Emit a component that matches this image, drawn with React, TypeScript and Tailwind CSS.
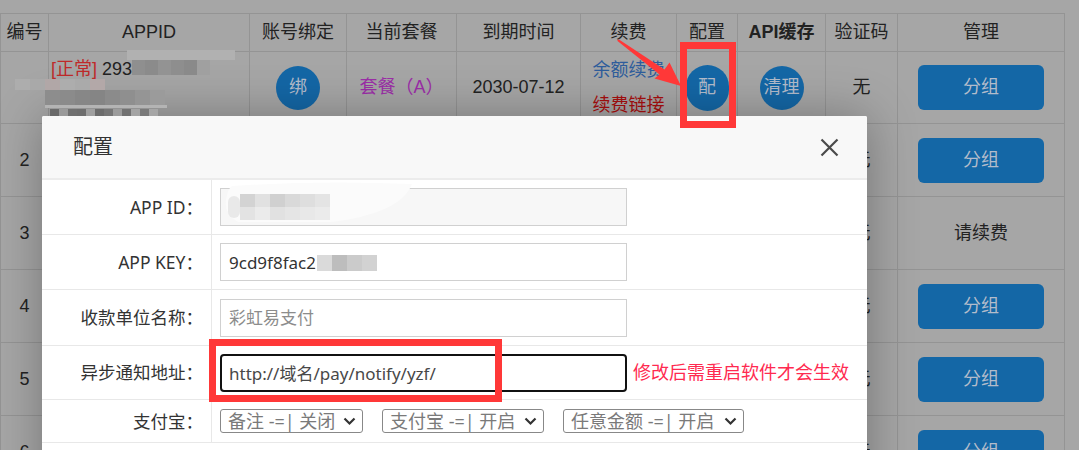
import React from "react";

const HEAD = ["编号", "APPID", "账号绑定", "当前套餐", "到期时间", "续费", "配置", "API缓存", "验证码", "管理"];

const Circle = ({ t }: { t: string }) => (
  <div className="w-[44px] h-[44px] rounded-full bg-[#1467a6] text-[#b3bccb] flex items-center justify-center text-[18px]">
    {t}
  </div>
);

const GroupBtn = () => (
  <div className="w-[126px] h-[45px] rounded-[6px] bg-[#1467a6] text-[#b3bccb] flex items-center justify-center text-[18px]">
    分组
  </div>
);

function Cell({ i, children, className = "" }: { i: number; children?: React.ReactNode; className?: string }) {
  const w = [
    "w-[48px]",
    "w-[201px]",
    "w-[97px]",
    "w-[110px]",
    "w-[124px]",
    "w-[96px]",
    "w-[61px]",
    "w-[88px]",
    "w-[72px]",
    "w-[167px]",
  ][i];
  return (
    <div className={`${w} shrink-0 h-full border-r border-[#949494] flex items-center justify-center ${className}`}>
      {children}
    </div>
  );
}

function Row({ h, children }: { h: string; children: React.ReactNode }) {
  return <div className={`flex ${h} border-b border-[#949494]`}>{children}</div>;
}

function Chevron() {
  return (
    <svg width="13" height="9" viewBox="0 0 13 9" className="shrink-0">
      <polyline points="1.5,1.5 6.5,6.5 11.5,1.5" fill="none" stroke="#333" strokeWidth="2.2" />
    </svg>
  );
}

function Sel({ w, text }: { w: string; text: string }) {
  return (
    <div
      className={`${w} h-[24px] border border-[#888] rounded-[3px] pl-[7px] pr-[6px] flex items-center justify-between text-[18px] leading-none text-[#7a7a7a] whitespace-nowrap`}
    >
      <span>{text}</span>
      <Chevron />
    </div>
  );
}

function FormRow({ h, label, children }: { h: string; label: string; children: React.ReactNode }) {
  return (
    <div className={`flex ${h} border-b border-[#e8e8e8]`}>
      <div className="w-[170px] shrink-0 border-r border-[#e8e8e8] flex items-center justify-end pr-[8px] text-[17.5px] text-[#333]">
        {label}
      </div>
      <div className="flex-1 flex items-center pl-[8px]">{children}</div>
    </div>
  );
}

export default function App() {
  const rows = [2, 3, 4, 5, 6];
  const mosaic = (x: number, y: number, w: number, h: number, colors: string[]) =>
    colors.map((c, k) => <rect key={`${x}-${y}-${k}`} x={x + k * w} y={y} width={w} height={h} fill={c} />);

  return (
    <div
      className="relative w-[1079px] h-[450px] overflow-hidden bg-[#a6a6a6]"
      style={{ fontFamily: '"Liberation Sans", "Noto Sans CJK SC", sans-serif' }}
    >
      {/* background table */}
      <div className="pt-[13px]">
        <div className="w-[1065px] border-l border-t border-[#949494] text-[18px] text-[#222]">
          <Row h="h-[38px]">
            {HEAD.map((t, i) => (
              <Cell key={t} i={i} className={i === 7 ? "font-bold" : ""}>
                {t}
              </Cell>
            ))}
          </Row>
          <Row h="h-[72px]">
            <Cell i={0} />
            <Cell i={1} className="!items-start !justify-start pl-[2px] pt-[5px]">
              <div className="leading-[25px]">
                <span className="text-[#bf2a2a]">[正常]</span> 293
              </div>
            </Cell>
            <Cell i={2}>
              <Circle t="绑" />
            </Cell>
            <Cell i={3}>
              <span className="text-[#9c2ea8]">套餐（A）</span>
            </Cell>
            <Cell i={4}>2030-07-12</Cell>
            <Cell i={5} className="flex-col gap-[11px]">
              <span className="text-[#2e5d9c] leading-[24px]">余额续费</span>
              <span className="text-[#a80e0e] leading-[24px]">续费链接</span>
            </Cell>
            <Cell i={6}>
              <div className="w-[43px] h-[46px] rounded-full bg-[#1467a6] text-[#b3bccb] flex items-center justify-center text-[18px]">
                配
              </div>
            </Cell>
            <Cell i={7}>
              <Circle t="清理" />
            </Cell>
            <Cell i={8}>无</Cell>
            <Cell i={9}>
              <GroupBtn />
            </Cell>
          </Row>
          {rows.map((n) => (
            <Row key={n} h="h-[73px]">
              <Cell i={0}>{n}</Cell>
              {[1, 2, 3, 4, 5, 6, 7].map((i) => (
                <Cell key={i} i={i} />
              ))}
              <Cell i={8}>无</Cell>
              <Cell i={9}>{n === 3 ? <span>请续费</span> : <GroupBtn />}</Cell>
            </Row>
          ))}
        </div>
      </div>

      {/* modal */}
      <div
        className="absolute left-[42px] top-[116px] w-[825px] h-[400px] bg-white rounded-t-[2px] shadow-[1px_1px_50px_rgba(0,0,0,0.3)] z-10"
        style={{ fontFamily: '"Noto Sans", "Noto Sans CJK SC", sans-serif' }}
      >
        <div className="h-[64px] bg-[#f8f8f8] border-b-2 border-[#ececec] flex items-center justify-between pl-[31px] pr-[28px] rounded-t-[2px]">
          <span className="text-[20px] text-[#333]">配置</span>
          <svg width="19" height="19" viewBox="0 0 19 19">
            <path d="M1.5 1.5 L17.5 17.5 M17.5 1.5 L1.5 17.5" stroke="#4a4a4a" strokeWidth="2.2" />
          </svg>
        </div>
        <FormRow h="h-[55px]" label="APP ID：">
          <div className="w-[407px] h-[38px] border border-[#d0d0d0] bg-[#f7f7f7]" />
        </FormRow>
        <FormRow h="h-[55px]" label="APP KEY：">
          <input
            readOnly
            defaultValue="9cd9f8fac2"
            className="w-[407px] h-[38px] border border-[#d0d0d0] bg-white pl-[8px] text-[17px] text-[#333] outline-none"
          />
        </FormRow>
        <FormRow h="h-[56px]" label="收款单位名称：">
          <input
            readOnly
            placeholder="彩虹易支付"
            className="w-[407px] h-[38px] border border-[#d0d0d0] bg-white pl-[8px] text-[17px] text-[#333] placeholder:text-[#8c8c8c] outline-none"
          />
        </FormRow>
        <FormRow h="h-[54px]" label="异步通知地址：">
          <input
            readOnly
            defaultValue="http://域名/pay/notify/yzf/"
            className="w-[407px] h-[38px] border-2 border-[#111] rounded-[4px] bg-white pl-[7px] text-[17px] text-[#484848] outline-none"
          />
          <span className="ml-[6px] text-[18px] text-[#ff2a50] whitespace-nowrap">修改后需重启软件才会生效</span>
        </FormRow>
        <FormRow h="h-[43px]" label="支付宝：">
          <div className="flex gap-[19px]">
            <Sel w="w-[143px]" text="备注 -=| 关闭" />
            <Sel w="w-[162px]" text="支付宝 -=| 开启" />
            <Sel w="w-[181px]" text="任意金额 -=| 开启" />
          </div>
        </FormRow>
        <div className="h-[60px]" />
      </div>

      {/* annotations & redactions */}
      <svg className="absolute left-0 top-0 z-20 pointer-events-none" width="1079" height="450" viewBox="0 0 1079 450">
        {/* table row 1 redactions */}
        <rect x="127" y="50" width="108" height="10" fill="#b1b1b1" />
        {mosaic(132, 60, 13, 15, ["#8f8f8f", "#8b8b8b", "#939393", "#8e8e8e", "#8a8a8a", "#a0a0a0"])}
        {mosaic(15, 79, 15, 11, ["#adadad", "#a9a9a9", "#b1a7a7", "#adadad", "#aaaaaa", "#b3a8a8"])}
        {mosaic(45, 90, 15, 15, ["#8d8d8d", "#8b8b8b", "#878787", "#858585", "#8b8b8b", "#8f8f8f", "#959595", "#9b9b9b"])}
        <rect x="45" y="105" width="122" height="3" fill="#b4b4b4" />
        {mosaic(50, 109, 9, 7, ["#6a6a6a", "#9a9a9a", "#707070", "#6e6e6e", "#a0a0a0", "#6c6c6c", "#767676", "#9c9c9c", "#727272", "#a4a4a4", "#7a7a7a", "#a6a6a6"])}

        {/* modal redactions */}
        <path d="M232 186 Q320 180 412 184 Q400 214 330 222 L238 222 Q224 214 226 200 Q228 188 232 186 Z" fill="#fbfbfb" />
        <rect x="228" y="196" width="12" height="22" rx="6" fill="#e9e9e9" />
        {mosaic(240, 194, 15, 13, ["#d3d3d3", "#e1e1e1", "#d0d0d0", "#d9d9d9", "#dedede", "#e4e4e4"])}
        {mosaic(240, 207, 15, 13, ["#e3e3e3", "#ebebeb", "#e1e1e1", "#e5e5e5", "#e8e8e8", "#ebebeb"])}
        <ellipse cx="348" cy="264" rx="34" ry="15" fill="#ffffff" />
        {mosaic(317, 255, 15, 16, ["#dadada", "#bdbdbd", "#cbcbcb", "#d2d2d2"])}

        {/* red highlight boxes */}
        <rect x="683.5" y="45.5" width="49" height="79" fill="none" stroke="#ff3838" strokeWidth="7" />
        <rect x="212.5" y="342.5" width="286" height="56" fill="none" stroke="#ff3838" strokeWidth="7" />

        {/* red arrow */}
        <polygon
          points="618.6,39.2 664.5,69.5 669.5,62.5 681,86 654.5,78.5 659.5,74.5 617.2,40.8"
          fill="#ff3838"
        />
      </svg>
    </div>
  );
}
